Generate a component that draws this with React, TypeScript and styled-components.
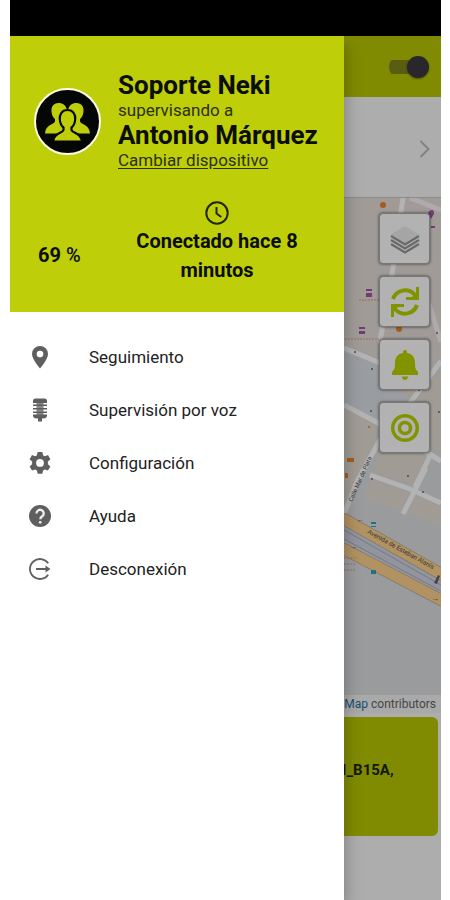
import React from "react";
import styled, { createGlobalStyle } from "styled-components";

const lime = "#becf0a";
const olive = "#808b02";
const grey = "#5f5f5f";

const GlobalStyle = createGlobalStyle`
  * { box-sizing: border-box; }
  body { margin: 0; background: #fff; font-family: Roboto, "Liberation Sans", sans-serif; color: #0c0e04; }
  button, a { font: inherit; color: inherit; }
  svg { display: block; }
`;

const Phone = styled.div`
  display: flex;
  flex-direction: column;
  min-height: 100vh;
  margin: 0 9px 0 10px;
  overflow: hidden;
`;

const StatusBar = styled.div`
  height: 36px;
  background: #000;
`;

const Content = styled.div`
  display: flex;
  flex: 1;
`;

const Drawer = styled.aside`
  position: relative;
  z-index: 1;
  width: 334px;
  flex-shrink: 0;
  background: #fff;
  box-shadow: 0 8px 16px rgba(0, 0, 0, 0.3);
`;

const DrawerHeader = styled.header`
  padding: 37px 20px 27px 24px;
  background: ${lime};
`;

const Profile = styled.div`
  display: flex;
  align-items: center;
  gap: 17px;
`;

const Avatar = styled.div`
  width: 67px;
  height: 67px;
  flex-shrink: 0;
  margin-top: -4px;
  border: 2px solid #fbfce8;
  border-radius: 50%;
  background: #050606;
`;

const ProfileText = styled.div`
  display: flex;
  flex-direction: column;
  align-items: flex-start;
  line-height: 25px;
  font-size: 17px;
  color: #2c3006;
  white-space: nowrap;
`;

const Name = styled.strong`
  font-size: 26px;
  font-weight: 700;
  color: #0c0e04;
`;

const DeviceLink = styled.a`
  text-decoration: underline;
  text-underline-offset: 2px;
`;

const Stats = styled.div`
  display: grid;
  grid-template-columns: 64px 1fr;
  align-items: end;
  gap: 12px;
  margin-top: 27px;
`;

const Battery = styled.div`
  padding: 0 0 15px 4px;
  font-size: 20px;
  line-height: 29px;
  font-weight: 700;
  white-space: nowrap;

  span { font-weight: 500; }
`;

const Connection = styled.div`
  display: flex;
  flex-direction: column;
  align-items: center;
  gap: 1px;
  padding: 0 24px;
  font-size: 20px;
  font-weight: 700;
  line-height: 29px;
  text-align: center;
`;

const Menu = styled.nav`
  display: flex;
  flex-direction: column;
  padding-top: 18px;
`;

const MenuItem = styled.button`
  display: flex;
  align-items: center;
  gap: 37px;
  height: 53px;
  padding: 0 18px;
  border: 0;
  background: none;
  font-size: 17px;
  color: #222;
  text-align: left;
  cursor: pointer;
`;

const Page = styled.main`
  display: flex;
  flex: 1;
  flex-direction: column;
  min-width: 0;
  background: #adadad;
`;

const Toolbar = styled.div`
  display: flex;
  align-items: center;
  justify-content: flex-end;
  height: 61px;
  padding-right: 12px;
  background: ${olive};
`;

const Switch = styled.input`
  display: flex;
  align-items: center;
  width: 40px;
  height: 22px;
  margin: 0;
  border-radius: 11px;
  appearance: none;
  background: linear-gradient(#585d11, #585d11) 0 4px / 32px 14px no-repeat;
  cursor: pointer;

  &::after {
    content: "";
    width: 22px;
    height: 22px;
    margin-left: auto;
    border-radius: 50%;
    background: #29272c;
    box-shadow: 0 1px 2px rgba(0, 0, 0, 0.4);
  }
`;

const DeviceRow = styled.button`
  display: flex;
  align-items: center;
  justify-content: flex-end;
  height: 101px;
  padding: 4px 11px 0 0;
  border: 0;
  border-bottom: 1px solid #8b8b8b;
  background: #adadad;
`;

const MapArea = styled.section`
  position: relative;
  flex: 1;
  min-height: 515px;
  overflow: hidden;
  background: #9a9b9d;
`;

const MapDrawing = styled.svg`
  position: absolute;
  inset: 0;
  width: 100%;
  height: 100%;
`;

const MapControls = styled.div`
  position: absolute;
  top: 15px;
  right: 11px;
  display: flex;
  flex-direction: column;
  gap: 12px;
`;

const MapButton = styled.button`
  display: grid;
  place-items: center;
  width: 51px;
  height: 51px;
  padding: 0;
  border: 1px solid #777;
  border-radius: 4px;
  background: #b2b2b2;
  box-shadow: 0 0 3px rgba(0, 0, 0, 0.65);
  cursor: pointer;
`;

const Attribution = styled.div`
  position: absolute;
  right: 0;
  bottom: 0;
  display: flex;
  justify-content: flex-end;
  width: 100%;
  padding-right: 5px;
  background: #a9a9a9;
  color: #454545;
  font-size: 12px;
  line-height: 18px;
  white-space: pre;

  a { color: #174f70; text-decoration: none; }
`;

const AddressCard = styled.div`
  height: 119px;
  margin: 4px 3px 65px -2px;
  padding-top: 42px;
  border-radius: 0 6px 6px 0;
  background: ${olive};
  color: #151704;
  font-size: 15px;
  font-weight: 700;
  line-height: 22px;
`;

const PeopleIcon = () => (
  <svg width="63" height="63" viewBox="0 0 63 63" fill={lime} aria-hidden="true">
    <path d="M22.500 13c-5 0-7.500 4-7 8.500.3 3.500 1.500 6 3.500 7.500v2.500c-1 3-9.500 3-10 12H31V20c-1-4.500-4-7-8.500-7z" />
    <path d="M40.500 13c5 0 7.500 4 7 8.500-.3 3.500-1.500 6-3.500 7.500v2.500c1 3 9.500 3 10 12H32V20c1-4.500 4-7 8.500-7z" />
    <path
      d="M31.500 20c-5.500 0-8.200 4.500-7.700 9.500.3 3.500 1.700 6.500 3.700 8v2.500c-1 3.500-9.500 2.500-10.500 11.500h29c-1-9-9.500-8-10.500-11.500v-2.500c2-1.500 3.400-4.500 3.700-8 .5-5-2.200-9.500-7.700-9.500z"
      stroke="#050606"
      strokeWidth="2.200"
    />
  </svg>
);

const ClockIcon = () => (
  <svg width="26" height="26" viewBox="0 0 26 26" fill="none" stroke="#222606" strokeWidth="2" aria-hidden="true">
    <circle cx="13" cy="13" r="10.700" />
    <path d="M12.500 7v6.500l4.800 3.500" />
  </svg>
);

const PinIcon = () => (
  <svg width="24" height="24" viewBox="0 0 24 24" fill={grey} aria-hidden="true">
    <path fillRule="evenodd" d="M12 1a8 8 0 0 0-8 8c0 5.500 8 14.500 8 14.500S20 14.500 20 9a8 8 0 0 0-8-8zm0 4.800a3.300 3.300 0 1 1 0 6.600 3.300 3.300 0 0 1 0-6.600z" />
  </svg>
);

const MicIcon = () => (
  <svg width="24" height="24" viewBox="0 0 24 24" fill={grey} aria-hidden="true">
    <path d="M7.500 0.500h9q2.500 0 2.500 2.500v2H5V3q0-2.500 2.500-2.500z" />
    <path d="M8.500 5h7v12h-7z" fill="#8a8a8a" />
    <path d="M5 6.500h14v1.600H5zM5 10h14v1.600H5zM5 13.500h14v1.600H5z" />
    <path d="M5 16.500h14v1q0 3-4 3h-1v3h-4v-3H9q-4 0-4-3z" />
  </svg>
);

const GearIcon = () => (
  <svg width="24" height="24" viewBox="0 0 24 24" fill={grey} aria-hidden="true">
    <path
      fillRule="evenodd"
      d="M9.600 1h4.800l.6 3.200 1.900 1.100 3.100-1.200 2.400 4.200-2.500 2.100v2.800l2.500 2.200-2.400 4.200-3.100-1.200-1.900 1.100-.6 3.200H9.600L9 19.500l-1.900-1.100L4 19.600l-2.400-4.200 2.500-2.200v-2.800L1.600 8.300 4 4.100l3.100 1.200L9 4.200zM12 8a3.900 3.900 0 1 0 0 7.800A3.900 3.900 0 0 0 12 8z"
    />
  </svg>
);

const HelpIcon = () => (
  <svg width="24" height="24" viewBox="0 0 24 24" aria-hidden="true">
    <circle cx="12" cy="12" r="11" fill={grey} />
    <path d="M8.500 9.500a3.600 3.600 0 1 1 5.800 2.700c-1.300 1-2 1.500-2 3" fill="none" stroke="#eee" strokeWidth="2.300" />
    <circle cx="12.200" cy="18.300" r="1.400" fill="#eee" />
  </svg>
);

const LogoutIcon = () => (
  <svg width="24" height="24" viewBox="0 0 24 24" fill="none" stroke={grey} strokeWidth="1.800" aria-hidden="true">
    <path d="M20.200 6.300A10 10 0 1 0 20.200 17.700M8 12h12" />
    <path d="M17.500 8.500 22.500 12l-5 3.500z" fill={grey} stroke="none" />
  </svg>
);

const ChevronIcon = () => (
  <svg width="11" height="20" viewBox="0 0 11 20" fill="none" stroke="#818181" strokeWidth="1.800" aria-hidden="true">
    <path d="M1.500 2 9.500 10l-8 8" />
  </svg>
);

const LayersIcon = () => (
  <svg width="32" height="32" viewBox="0 0 32 32" aria-hidden="true">
    <path d="M16 3l14 8.500L16 20 2 11.500z" fill="#a5a5a5" />
    <g fill="none" stroke="#696969" strokeWidth="2.200">
      <path d="M2 13l14 8.500L30 13M2 17l14 8.500L30 17M2 21l14 8.500L30 21" />
    </g>
  </svg>
);

const SyncIcon = () => (
  <svg width="32" height="32" viewBox="0 0 32 32" fill="#829300" aria-hidden="true">
    <g id="arrow">
      <path d="M4 13C7 4 19 1 26 9" fill="none" stroke="#829300" strokeWidth="4" />
      <path d="M30 1v13H17v-3h6l4-4V1z" />
    </g>
    <path d="M28 19C25 28 13 31 6 23" fill="none" stroke="#829300" strokeWidth="4" />
    <path d="M2 31V18h13v3H9l-4 4v6z" />
  </svg>
);

const BellIcon = () => (
  <svg width="32" height="32" viewBox="0 0 32 32" fill="#829300" aria-hidden="true">
    <path d="M16 1a2 2 0 0 0-2 2v1C8 5 6 9 6 14c0 6-1 7-3 9v3h26v-3c-2-2-3-3-3-9 0-5-2-9-8-10V3a2 2 0 0 0-2-2zM12.500 27.500h7Q18 31 16 31t-3.500-3.500z" />
  </svg>
);

const TargetIcon = () => (
  <svg width="32" height="32" viewBox="0 0 32 32" fill="none" stroke="#829300" aria-hidden="true">
    <circle cx="16" cy="16" r="12.300" strokeWidth="3.400" />
    <circle cx="16" cy="16" r="5.500" strokeWidth="3.600" />
  </svg>
);

const StreetMap = () => (
  <MapDrawing viewBox="0 0 97 515" preserveAspectRatio="xMinYMin slice" aria-hidden="true">
    <path d="M0 0h97v165L66 205 35 195 0 150z" fill="#a09b97" />
    <path d="M0 150l36 18 30 36-30 22L0 205z" fill="#999ca0" />
    <path d="M0 208l35 22-9 24L4 305H0zM97 170v85l-30-10 3-40zM40 235l45 20-15 32-42-12zM28 280l37 14-8 19-36-12zM72 295l25 10v24l-34-14z" fill="#a09b95" />
    <g fill="none" stroke="#b3b3b3" strokeWidth="5">
      <path d="M59 0 48 76 36 143 42 160" />
      <path d="M66 0 97 12M83 100 97 144" stroke="#b0a9ad" />
      <path d="M97 163 66 205 36 242 13 283 0 316" />
      <path d="M0 150 36 165M0 207 36 226 97 263" />
      <path d="M86 258 71 289M26 277 66 291 97 305M82 270 59 316" />
    </g>
    <path d="M-2 329 99 386" stroke="#92949e" strokeWidth="21" />
    <g fill="none" stroke="#746b63" strokeWidth="12">
      <path d="M-2 320 99 377M-2 350 99 403" />
    </g>
    <g fill="none" stroke="#b19262" strokeWidth="11">
      <path d="M-2 320 99 377M-2 350 99 403" />
    </g>
    <path d="M0 332 97 387M0 341 97 393" stroke="#777985" strokeWidth="1" />
    <g fill="#343434" fontFamily="Roboto, sans-serif">
      <text transform="translate(23 335) rotate(29)" fontSize="6.400">Avenida de Esteban Alanís</text>
      <text transform="translate(8 304) rotate(-66)" fontSize="6">Calle Mar de Plata</text>
      <text x="13" y="324" fontSize="7">←</text>
      <text x="6" y="351" fontSize="7">→</text>
      <text x="87" y="403" fontSize="8">→</text>
    </g>
    <path d="M90 385l4-8 2 1-3 8z" fill="#444" />
    <g fill="#713c76">
      <path d="M22 91h6v2h-6zM22 95h6v4h-6zM15 129h6v2h-6zM15 133h6v3h-6z" />
      <path d="M84 14q6-5 6 2l-3 5zM87 28h4v2h-4z" />
    </g>
    <g fill="#a45d1d">
      <circle cx="39" cy="7" r="3" /><circle cx="55" cy="131" r="3" />
      <path d="M3 260h7v4H3zM1 275h3v5H1z" />
      <circle cx="25" cy="229" r="1" />
    </g>
    <g stroke="#98705b" strokeWidth="1" strokeDasharray="2 1">
      <path d="M15 102h20M1 141h34M0 360h13M0 366h12M0 372h11" />
    </g>
    <path d="M27 324h5v2h-5zM27 328h5v1h-5zM27 372h5v4h-5z" fill="#286f7b" />
    <g fill="#4c4c4c">
      <circle cx="11" cy="154" r="1" /><circle cx="75" cy="192" r="1" />
      <circle cx="46" cy="205" r="1" /><circle cx="95" cy="214" r="1" />
      <circle cx="28" cy="171" r="1" /><circle cx="27" cy="213" r="1" />
      <circle cx="64" cy="278" r="1" /><circle cx="79" cy="294" r="1" />
      <circle cx="93" cy="135" r="1" /><circle cx="28" cy="281" r="1" />
    </g>
  </MapDrawing>
);

const menuItems = [
  { label: "Seguimiento", Icon: PinIcon },
  { label: "Supervisión por voz", Icon: MicIcon },
  { label: "Configuración", Icon: GearIcon },
  { label: "Ayuda", Icon: HelpIcon },
  { label: "Desconexión", Icon: LogoutIcon },
];

const mapButtons = [
  { label: "Capas", Icon: LayersIcon },
  { label: "Actualizar", Icon: SyncIcon },
  { label: "Avisos", Icon: BellIcon },
  { label: "Centrar", Icon: TargetIcon },
];

export default function App() {
  return (
    <>
      <GlobalStyle />
      <Phone>
        <StatusBar />
        <Content>
          <Drawer>
            <DrawerHeader>
              <Profile>
                <Avatar><PeopleIcon /></Avatar>
                <ProfileText>
                  <Name>Soporte Neki</Name>
                  <span>supervisando a</span>
                  <Name>Antonio Márquez</Name>
                  <DeviceLink href="#dispositivo">Cambiar dispositivo</DeviceLink>
                </ProfileText>
              </Profile>
              <Stats>
                <Battery>69 <span>%</span></Battery>
                <Connection>
                  <ClockIcon />
                  Conectado hace 8 minutos
                </Connection>
              </Stats>
            </DrawerHeader>
            <Menu>
              {menuItems.map(({ label, Icon }) => (
                <MenuItem key={label} type="button"><Icon />{label}</MenuItem>
              ))}
            </Menu>
          </Drawer>
          <Page>
            <Toolbar>
              <Switch type="checkbox" role="switch" defaultChecked aria-label="Seguimiento activo" />
            </Toolbar>
            <DeviceRow type="button" aria-label="Ver dispositivo"><ChevronIcon /></DeviceRow>
            <MapArea>
              <StreetMap />
              <MapControls>
                {mapButtons.map(({ label, Icon }) => (
                  <MapButton key={label} type="button" aria-label={label}><Icon /></MapButton>
                ))}
              </MapControls>
              <Attribution><a href="#mapa">Map</a> contributors</Attribution>
            </MapArea>
            <AddressCard>I_B15A,</AddressCard>
          </Page>
        </Content>
      </Phone>
    </>
  );
}
